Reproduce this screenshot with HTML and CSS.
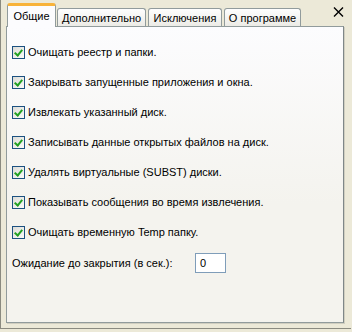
FILE: index.html
```html
<!DOCTYPE html>
<html lang="ru">
<head>
    <meta charset="UTF-8">
    <title>Настройки</title>
    <link rel="stylesheet" href="styles.css">
</head>
<body>
    <div class="window">
        <div class="tabbar">
            <div class="tab active tab-general">Общие</div>
            <div class="tab tab-extra">Дополнительно</div>
            <div class="tab tab-except">Исключения</div>
            <div class="tab tab-about">О программе</div>
            <svg class="close" width="11" height="10" viewBox="0 0 11 10">
                <path d="M1 0.5 L10 9.5 M10 0.5 L1 9.5" stroke="#000" stroke-width="1.4" fill="none"/>
            </svg>
        </div>
        <div class="panel">
            <div class="options">
                <label class="option"><span class="check"></span>Очищать реестр и папки.</label>
                <label class="option"><span class="check"></span>Закрывать запущенные приложения и окна.</label>
                <label class="option"><span class="check"></span>Извлекать указанный диск.</label>
                <label class="option"><span class="check"></span>Записывать данные открытых файлов на диск.</label>
                <label class="option"><span class="check"></span>Удалять виртуальные (SUBST) диски.</label>
                <label class="option"><span class="check"></span>Показывать сообщения во время извлечения.</label>
                <label class="option"><span class="check"></span>Очищать временную Temp папку.</label>
            </div>
            <div class="wait">
                <span class="wait-label">Ожидание до закрытия (в сек.):</span>
                <div class="field">0</div>
            </div>
        </div>
    </div>
</body>
</html>
```

FILE: styles.css
```css
html, body {
    margin: 0;
    padding: 0;
    background: #ece9d8;
    font-family: "Liberation Sans", Arial, sans-serif;
    font-size: 11px;
    color: #000;
}
.window {
    width: 351px;
    height: 329px;
    border-left: 1px solid #8a8a80;
    border-bottom: 1px solid #8a8a80;
    box-sizing: border-box;
    padding-top: 4px;
}
.tabbar {
    display: flex;
    align-items: flex-end;
    gap: 2px;
    padding-left: 6px;
    height: 22px;
}
.tab {
    height: 18px;
    line-height: 18px;
    text-align: center;
    white-space: nowrap;
    border: 1px solid #919b9c;
    border-bottom: none;
    border-radius: 3px 3px 0 0;
    background: linear-gradient(#fefefe, #ecebe6);
    box-sizing: border-box;
}
.tab-general { width: 49px; }
.tab-extra { width: 89px; }
.tab-except { width: 74px; }
.tab-about { width: 77px; }
.tab.active {
    height: 24px;
    line-height: 20px;
    margin-bottom: -1px;
    margin-right: -1px;
    border-top: 3px solid #f8b33a;
    background: #fcfcfe;
    position: relative;
    z-index: 1;
}
.close {
    margin-left: auto;
    margin-right: 7px;
    align-self: flex-start;
    margin-top: 3px;
}
.panel {
    margin: 0 7px 0 5px;
    height: 297px;
    border: 1px solid #919b9c;
    border-right-color: #7f8788;
    box-shadow: 1px 1px 0 #d0cec0;
    background: linear-gradient(#fcfcfe, #f4f3ee 60%);
    box-sizing: border-box;
    padding: 10px 0 0 5px;
}
.option {
    display: flex;
    align-items: center;
    height: 30px;
    gap: 3px;
    white-space: nowrap;
}
.check {
    width: 13px;
    height: 13px;
    box-sizing: border-box;
    border: 1px solid #1c5180;
    background: linear-gradient(135deg, #dcdcd7, #fbfbf9);
    position: relative;
    flex-shrink: 0;
}
.check::after {
    content: "";
    position: absolute;
    left: 3px;
    top: 1px;
    width: 3px;
    height: 6px;
    border: solid #21a121;
    border-width: 0 2px 2px 0;
    transform: rotate(40deg);
}
.wait {
    display: flex;
    align-items: center;
    height: 20px;
    margin-top: 6px;
    white-space: nowrap;
}
.wait-label {
    width: 183px;
}
.field {
    width: 31px;
    height: 20px;
    box-sizing: border-box;
    border: 1px solid #7f9db9;
    background: #fff;
    padding-left: 4px;
    line-height: 18px;
}
```
